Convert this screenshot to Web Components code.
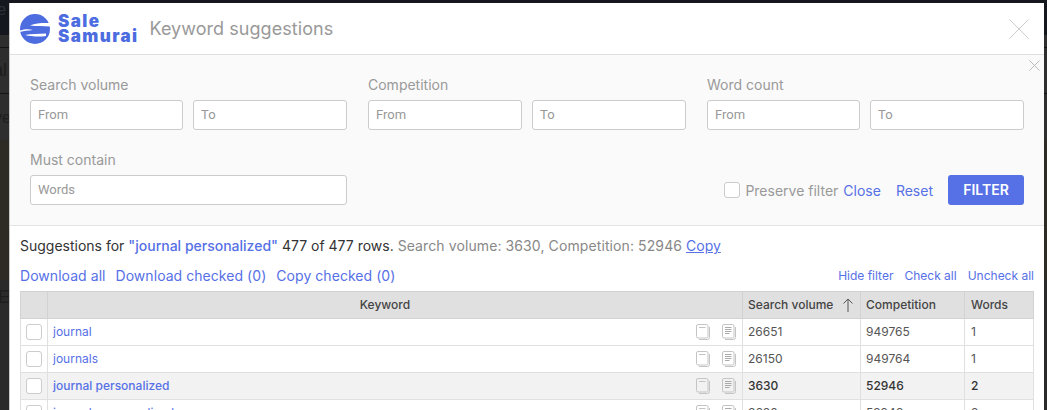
<!DOCTYPE html>
<html lang="en">
<head>
<meta charset="UTF-8">
<title>Keyword suggestions</title>
<style>
html,body{margin:0;height:100%;overflow:hidden;background:#14171e}
body{font-family:Inter,"Noto Sans",sans-serif;color:#333}
</style>
</head>
<body>
<template id="t-backdrop">
  <style>
    :host{display:block;height:410px;overflow:hidden;padding:3px 3px 0 10px;box-sizing:border-box;position:relative;
      background:linear-gradient(#14171e 0 35px,#2e2e2e 35px 47px,#141414 47px 48px,#2e2e2e 48px 93px,#141414 93px 94px,#2e2e2e 94px 140px,#2e2a24 140px 280px,#2a2a2a 280px)}
    .ghost{position:absolute;font:16px "Liberation Sans",sans-serif;color:#1d1d1d}
    .edge{position:absolute;left:9px;top:3px;bottom:0;width:1px;background:#c8c8c8}
  </style>
  <span class="ghost" style="left:-8px;top:1px;color:#2b3038">re</span>
  <span class="ghost" style="left:-7px;top:60px;font-size:18px">al</span>
  <span class="ghost" style="left:-6px;top:109px">ve</span>
  <span class="ghost" style="left:-2px;top:287px;font-size:18px">E:</span>
  <div class="edge"></div>
  <slot></slot>
</template>

<template id="t-modal">
  <style>
    :host{display:block;background:#fff;height:407px;overflow:hidden;position:relative}
    header{display:flex;align-items:center;height:51px;border-bottom:1px solid #e0e0e0;padding-left:10px;position:relative}
    h1{margin:0 0 0 11px;font:400 18px Inter,sans-serif;color:#999;letter-spacing:.05px}
    svg{display:block}
    .x{position:absolute;right:15px;top:16px}
    .logo{display:flex;align-items:center;gap:8px}
    .word{font:900 17px/15px Inter,sans-serif;color:#4c6ce0;letter-spacing:1.4px;padding-top:1px}
  </style>
  <header>
    <div class="logo">
      <svg width="30" height="30" viewBox="0 0 30 30">
        <circle cx="15" cy="15" r="15" fill="#4c6ce0"/>
        <path fill="#fff" d="M10 11.500C16 8.500 24 9 31 9v3.500C24 12 17 12.500 10 11.500zM5 21C11 19.500 19 20 26 19.500v2.500C19 23 11 22.500 5 21z"/>
        <path fill="#fff" d="M0 16.500C5 15 9 15 13 16 8 16.500 4 17 0 18z"/>
      </svg>
      <div class="word">Sale<br>Samurai</div>
    </div>
    <h1>Keyword suggestions</h1>
    <svg class="x" width="20" height="20" viewBox="0 0 20 20"><path d="M.5.5l19 19M19.500.5l-19 19" stroke="#ccc" fill="none"/></svg>
  </header>
  <slot></slot>
</template>

<template id="t-filter">
  <style>
    :host{display:block;background:#fafafa;border-bottom:1px solid #e3e3e3;height:171px;box-sizing:border-box;padding:21px 20px 0;position:relative;font:400 14px Inter,sans-serif}
    .x{position:absolute;right:4px;top:5px}
    .grid{display:grid;grid-template-columns:317px 318px 317px;column-gap:21px}
    .row2{display:flex;align-items:flex-end;margin-top:21px}
    .row2 kw-range{width:317px}
    .end{margin-left:auto;display:flex;align-items:center;color:#999;font-size:14px}
    .box{width:16px;height:16px;box-sizing:border-box;border:1px solid #ccc;border-radius:3px;background:#fff;margin-right:5px}
    a{color:#5670e6}
    .close{margin-left:5px}.reset{margin-left:15px}
    button{margin-left:15px;width:76px;height:30px;border:0;border-radius:3px;background:#5670e6;color:#fff;font:600 14px Inter,sans-serif;padding:0 0 2px}
  </style>
  <svg class="x" width="11" height="11" viewBox="0 0 11 11"><path d="M.5.5l10 10M10.500.5l-10 10" stroke="#bbb" fill="none"/></svg>
  <div class="grid">
    <kw-range label="Search volume"></kw-range>
    <kw-range label="Competition" wide></kw-range>
    <kw-range label="Word count"></kw-range>
  </div>
  <div class="row2">
    <kw-range label="Must contain" single></kw-range>
    <div class="end">
      <span class="box"></span><span>Preserve filter</span>
      <a class="close">Close</a><a class="reset">Reset</a>
      <button>FILTER</button>
    </div>
  </div>
</template>

<template id="t-range">
  <style>
    :host{display:block}
    label{display:block;color:#999;font:400 14px/18px Inter,sans-serif;margin-bottom:6px}
    .in{display:flex;gap:10px}
    span{flex:1;height:30px;box-sizing:border-box;border:1px solid #ccc;border-radius:3px;background:#fff;color:#999;font:400 13px/28px Roboto,sans-serif;padding-left:7px}
    span.from{flex:0 0 153px}
    :host([wide]) span.from{flex:1}
  </style>
  <label></label><div class="in"></div>
</template>

<template id="t-results">
  <style>
    :host{display:block;padding:10px 10px 0;font:400 14px Inter,sans-serif}
    .sum{line-height:20px;color:#333}
    .sum b{font-weight:500;color:#5670e6}
    .sum small{font-size:14px;color:#888;letter-spacing:.1px}
    .sum u{color:#5670e6}
    .links{display:flex;align-items:center;margin-top:9px;height:20px;color:#5670e6;letter-spacing:.05px;gap:10px}
    .right{margin-left:auto;font-size:12px;display:flex;gap:11px;letter-spacing:0}
    ::slotted(kw-table){margin-top:6px}
  </style>
  <div class="sum">Suggestions for <b>"journal personalized"</b> 477 of 477 rows. <small>Search volume: 3630, Competition: 52946</small> <u>Copy</u></div>
  <div class="links"><a>Download all</a><a>Download checked (0)</a><a>Copy checked (0)</a>
    <div class="right"><a>Hide filter</a><a>Check all</a><a>Uncheck all</a></div></div>
  <slot></slot>
</template>

<template id="t-table">
  <style>
    :host{display:block;width:1014px;font:400 12px Inter,sans-serif;color:#444}
    .head{display:grid;grid-template-columns:28px 695px 118px 104px 69px;height:28px;box-sizing:border-box;background:#e0e0e0;border:1px solid #d2d2d2;border-width:1px 0;font-weight:500;line-height:26px}
    .head div{border-right:1px solid #d2d2d2;padding-left:5px;box-sizing:border-box}
    .head div:first-child{border-left:1px solid #d2d2d2}
    .head div:nth-child(2){padding:0 20px 0 0;text-align:center}
    .head div:last-child{padding-left:6px}
    .sv{display:flex;align-items:center;justify-content:space-between;padding-right:7px}
  </style>
  <div class="head"><div></div><div>Keyword</div><div class="sv">Search volume <svg width="10" height="14" viewBox="0 0 10 14"><path d="M5 14V1M.5 5.500L5 1l4.500 4.500" stroke="#555" fill="none"/></svg></div><div>Competition</div><div>Words</div></div>
  <slot></slot>
</template>

<template id="t-row">
  <style>
    :host{display:grid;grid-template-columns:28px 695px 118px 104px 69px;height:27px;box-sizing:border-box;border-bottom:1px solid #e0e0e0;font:400 12px/26px Inter,sans-serif;color:#555}
    :host([current]){background:#f2f2f2;font-weight:500;color:#333}
    .c{border-right:1px solid #e0e0e0;padding-left:5px;box-sizing:border-box}
    .c.check{border-left:1px solid #e0e0e0;padding:5px 0 0 5px}
    .c.words{padding-left:6px}
    .box{display:block;width:16px;height:16px;box-sizing:border-box;border:1px solid #ccc;border-radius:3px;background:#fff}
    .kw{display:flex;justify-content:space-between;align-items:center;color:#5670e6;padding-right:6px}
    .icons{display:flex;gap:12px}
    svg{display:block}
  </style>
  <div class="c check"><span class="box"></span></div>
  <div class="c kw"><span class="name"></span><span class="icons">
    <svg width="14" height="16" viewBox="0 0 14 16" fill="none" stroke="#c4c4c4"><path d="M13.500 3v10.500a2 2 0 0 1-2 2H3"/><rect x=".5" y=".5" width="11.500" height="13.500" rx="1.500"/><path d="M3 3.500h6.500"/></svg>
    <svg width="14" height="16" viewBox="0 0 14 16" fill="none" stroke="#c4c4c4"><path d="M13.500 3v10.500a2 2 0 0 1-2 2H3"/><rect x=".5" y=".5" width="11.500" height="13.500" rx="1.500"/><path d="M3 3.500h6.500M3 5.500h6.500M3 7.500h6.500M3 9.500h4.500" stroke="#aaa"/></svg>
  </span></div>
  <div class="c vol"></div><div class="c comp"></div><div class="c words"></div>
</template>

<script>
function mount(el, id) {
  const root = el.attachShadow({mode:"open"})
  root.appendChild(document.getElementById(id).content.cloneNode(true))
  return root
}
customElements.define("kw-backdrop", class extends HTMLElement { connectedCallback(){ mount(this,"t-backdrop") } })
customElements.define("kw-modal", class extends HTMLElement { connectedCallback(){ mount(this,"t-modal") } })
customElements.define("kw-filter", class extends HTMLElement { connectedCallback(){ mount(this,"t-filter") } })
customElements.define("kw-range", class extends HTMLElement {
  connectedCallback(){
    const root = mount(this,"t-range")
    root.querySelector("label").textContent = this.getAttribute("label")
    root.querySelector(".in").innerHTML = this.hasAttribute("single")
      ? `<span>Words</span>`
      : `<span class="from">From</span><span>To</span>`
  }
})
customElements.define("kw-results", class extends HTMLElement { connectedCallback(){ mount(this,"t-results") } })
customElements.define("kw-table", class extends HTMLElement { connectedCallback(){ mount(this,"t-table") } })
customElements.define("kw-row", class extends HTMLElement {
  connectedCallback(){
    const root = mount(this,"t-row")
    for (const k of ["name","vol","comp","words"]) root.querySelector("."+k).textContent = this.getAttribute(k)
  }
})
</script>
<kw-backdrop>
  <kw-modal>
    <kw-filter></kw-filter>
    <kw-results>
      <kw-table>
        <kw-row name="journal" vol="26651" comp="949765" words="1"></kw-row>
        <kw-row name="journals" vol="26150" comp="949764" words="1"></kw-row>
        <kw-row current name="journal personalized" vol="3630" comp="52946" words="2"></kw-row>
        <kw-row name="journals personalized" vol="3630" comp="52946" words="2"></kw-row>
      </kw-table>
    </kw-results>
  </kw-modal>
</kw-backdrop>
</body>
</html>
